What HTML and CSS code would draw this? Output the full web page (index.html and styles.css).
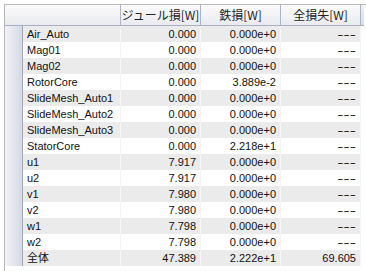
FILE: index.html
```html
<!DOCTYPE html>
<html lang="ja">
<head>
<meta charset="utf-8">
<link rel="stylesheet" href="styles.css">
</head>
<body>
<div class="panel">
  <div class="head">
    <div class="hc corner"></div>
    <div class="hc">ジュール損[W]</div>
    <div class="hc">鉄損[W]</div>
    <div class="hc">全損失[W]</div>
    <div class="hfill"></div>
  </div>
  <div class="body">
    <div class="row odd"><div class="rh"></div><div class="c name">Air_Auto</div><div class="c num">0.000</div><div class="c num">0.000e+0</div><div class="c num"><span class="dash">---</span></div></div>
    <div class="row"><div class="rh"></div><div class="c name">Mag01</div><div class="c num">0.000</div><div class="c num">0.000e+0</div><div class="c num"><span class="dash">---</span></div></div>
    <div class="row odd"><div class="rh"></div><div class="c name">Mag02</div><div class="c num">0.000</div><div class="c num">0.000e+0</div><div class="c num"><span class="dash">---</span></div></div>
    <div class="row"><div class="rh"></div><div class="c name">RotorCore</div><div class="c num">0.000</div><div class="c num">3.889e-2</div><div class="c num"><span class="dash">---</span></div></div>
    <div class="row odd"><div class="rh"></div><div class="c name">SlideMesh_Auto1</div><div class="c num">0.000</div><div class="c num">0.000e+0</div><div class="c num"><span class="dash">---</span></div></div>
    <div class="row"><div class="rh"></div><div class="c name">SlideMesh_Auto2</div><div class="c num">0.000</div><div class="c num">0.000e+0</div><div class="c num"><span class="dash">---</span></div></div>
    <div class="row odd"><div class="rh"></div><div class="c name">SlideMesh_Auto3</div><div class="c num">0.000</div><div class="c num">0.000e+0</div><div class="c num"><span class="dash">---</span></div></div>
    <div class="row"><div class="rh"></div><div class="c name">StatorCore</div><div class="c num">0.000</div><div class="c num">2.218e+1</div><div class="c num"><span class="dash">---</span></div></div>
    <div class="row odd"><div class="rh"></div><div class="c name">u1</div><div class="c num">7.917</div><div class="c num">0.000e+0</div><div class="c num"><span class="dash">---</span></div></div>
    <div class="row"><div class="rh"></div><div class="c name">u2</div><div class="c num">7.917</div><div class="c num">0.000e+0</div><div class="c num"><span class="dash">---</span></div></div>
    <div class="row odd"><div class="rh"></div><div class="c name">v1</div><div class="c num">7.980</div><div class="c num">0.000e+0</div><div class="c num"><span class="dash">---</span></div></div>
    <div class="row"><div class="rh"></div><div class="c name">v2</div><div class="c num">7.980</div><div class="c num">0.000e+0</div><div class="c num"><span class="dash">---</span></div></div>
    <div class="row odd"><div class="rh"></div><div class="c name">w1</div><div class="c num">7.798</div><div class="c num">0.000e+0</div><div class="c num"><span class="dash">---</span></div></div>
    <div class="row"><div class="rh"></div><div class="c name">w2</div><div class="c num">7.798</div><div class="c num">0.000e+0</div><div class="c num"><span class="dash">---</span></div></div>
    <div class="row odd"><div class="rh"></div><div class="c name">全体</div><div class="c num">47.389</div><div class="c num">2.222e+1</div><div class="c num">69.605</div></div>
  </div>
</div>
</body>
</html>
```
FILE: styles.css
```css
* { box-sizing: border-box; }
html, body { margin: 0; padding: 0; background: #fff; }
body {
  font-family: "Liberation Sans", "Noto Sans CJK JP", sans-serif;
  font-size: 11px;
  color: #111;
}
.panel {
  margin: 4px 0 0 4px;
  height: 267px;
  border-left: 1px solid #b9b9b9;
  border-top: 1px solid #b9b9b9;
}
.head {
  display: flex;
  height: 21px;
  width: 359px;
  border-bottom: 1px solid #a7b0c6;
  background: linear-gradient(#fcfcfd, #e9eaef);
}
.hc {
  width: 80px;
  flex: none;
  border-right: 1px solid #aab3ca;
  font-family: "Noto Sans CJK JP", sans-serif;
  font-size: 12px;
  line-height: 20px;
  text-align: center;
  color: #222;
}
.hc.corner { width: 116px; }
.hfill { flex: 1; background: linear-gradient(#eef0f5, #d9dde8); }
.row {
  display: flex;
  height: 16px;
  line-height: 16px;
  width: 356px;
}
.rh {
  width: 18px;
  flex: none;
  border-right: 1px solid #9ea7be;
  background: linear-gradient(90deg, #f3f3f7, #d5d9e4);
}
.c {
  flex: none;
  width: 80px;
  border-right: 1px solid #f3f3f3;
  white-space: nowrap;
  overflow: hidden;
}
.row.odd .c { background: #ebebeb; border-right-color: #f6f6f6; }
.name { width: 98px; padding-left: 4px; }
.num { text-align: right; padding-right: 4px; }
.dash {
  display: inline-block;
  transform: scaleX(1.7);
  transform-origin: right center;
}
```
